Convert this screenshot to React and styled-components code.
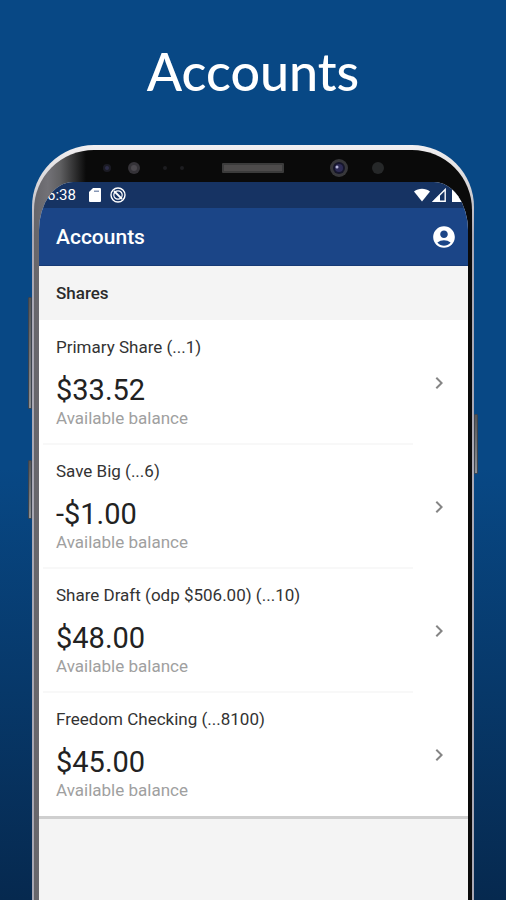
import { createGlobalStyle, styled } from "styled-components";
import { MdAccountCircle, MdChevronRight } from "react-icons/md";

const GlobalStyle = createGlobalStyle`
  * {
    box-sizing: border-box;
  }

  body {
    margin: 0;
    background: #06294f;
    font-family: Roboto, "Liberation Sans", sans-serif;
  }
`;

const Page = styled.div`
  display: flex;
  flex-direction: column;
  min-height: 100vh;
  background: linear-gradient(#084885 0%, #084885 52%, #06294f 100%);
`;

const Headline = styled.h1`
  margin: 0;
  padding: 41px 16px 44px;
  color: #fff;
  font-family: Lato, sans-serif;
  font-size: 52px;
  font-weight: 500;
  line-height: 60px;
  text-align: center;
`;

const Phone = styled.div`
  position: relative;
  display: flex;
  flex: 1;
  margin: 0 32px;
  padding: 5px 2px 0;
  border-radius: 62px 62px 0 0;
  background: linear-gradient(#f2f0f2 0, #d8d6d8 40px, #a9a8b4 90px);
`;

const SideKey = styled.span`
  position: absolute;
  top: ${({ $top }) => $top}px;
  ${({ $side }) => $side}: -4px;
  width: 4px;
  height: ${({ $height }) => $height}px;
  border: 1px solid #3c4450;
  border-radius: 1px;
  background: linear-gradient(#555, #8c8f92);
`;

const Bezel = styled.div`
  display: flex;
  flex: 1;
  flex-direction: column;
  min-width: 0;
  padding: 0 4px 0 5px;
  border-radius: 60px 60px 0 0;
  background: linear-gradient(
    to right,
    #66656a 0,
    #727176 14px,
    #606062 26px,
    #0a0a0a 52px
  );
`;

const SensorBar = styled.div`
  height: 32px;
  padding: 0 60px;

  svg {
    display: block;
    width: 100%;
    height: 32px;
  }
`;

const Screen = styled.main`
  display: flex;
  flex: 1;
  flex-direction: column;
  overflow: hidden;
  border-radius: 34px 34px 0 0 / 48px 48px 0 0;
  background: #f4f4f4;
`;

const StatusBar = styled.div`
  display: flex;
  align-items: center;
  height: 26px;
  padding: 0 6px 0 8px;
  background: #163363;
  color: #fff;
  font-size: 15px;
  line-height: 26px;
`;

const StatusIcons = styled.div`
  display: flex;
  align-items: center;
  gap: ${({ $gap }) => $gap}px;
  margin-left: ${({ $end }) => ($end ? "auto" : "12px")};
`;

const AppBar = styled.header`
  display: flex;
  align-items: center;
  justify-content: space-between;
  height: 58px;
  padding: 0 11px 0 17px;
  border-bottom: 1px solid #163a75;
  background: #1b4587;
  color: #fff;
`;

const AppTitle = styled.h2`
  margin: 0;
  font-size: 21px;
  font-weight: 500;
  line-height: 28px;
`;

const IconButton = styled.button`
  display: flex;
  padding: 0;
  border: none;
  background: none;
  color: inherit;
  cursor: pointer;
`;

const SectionTitle = styled.h3`
  margin: 0;
  padding: 17px;
  color: #2b2b2b;
  font-size: 17px;
  font-weight: 500;
  line-height: 20px;
`;

const AccountList = styled.ul`
  margin: 0;
  padding: 0;
  border-bottom: 3px solid #cfcfcf;
  background: #fff;
  list-style: none;
`;

const AccountItem = styled.li`
  & + &::before {
    content: "";
    display: block;
    height: 2px;
    margin: -1px 55px -1px 4px;
    background: #f8f8f8;
  }
`;

const AccountButton = styled.button`
  display: flex;
  align-items: center;
  justify-content: space-between;
  width: 100%;
  padding: 17px 17px 16px;
  border: none;
  background: none;
  color: #222;
  font-family: inherit;
  text-align: left;
  cursor: pointer;
`;

const AccountInfo = styled.span`
  display: flex;
  flex-direction: column;
`;

const AccountName = styled.span`
  margin-bottom: 15px;
  color: #333;
  font-size: 17px;
  line-height: 20px;
`;

const Balance = styled.span`
  font-size: 29px;
  line-height: 36px;
`;

const Caption = styled.span`
  color: #a0a0a0;
  font-size: 17px;
  line-height: 20px;
`;

const accounts = [
  { name: "Primary Share (...1)", balance: "$33.52" },
  { name: "Save Big (...6)", balance: "-$1.00" },
  { name: "Share Draft (odp $506.00) (...10)", balance: "$48.00" },
  { name: "Freedom Checking (...8100)", balance: "$45.00" },
];

function Sensors() {
  return (
    <svg viewBox="0 0 309 32" aria-hidden="true">
      <circle cx="8" cy="18" r="4" fill="#1b1b24" />
      <circle cx="8" cy="18" r="2" fill="#2c2c48" />
      <circle cx="35" cy="18" r="6" fill="#353338" />
      <circle cx="35" cy="18" r="3" fill="#4b484d" />
      <circle cx="66" cy="18" r="2" fill="#1d1d20" />
      <circle cx="83" cy="18" r="2" fill="#1d1d20" />
      <rect x="123" y="13" width="62" height="10" rx="1" fill="#3b3b3b" />
      <rect x="125" y="15" width="58" height="6" fill="#4d4b4b" />
      <circle cx="240" cy="18" r="9" fill="#37373a" />
      <circle cx="240" cy="18" r="6" fill="#15152a" />
      <circle cx="240" cy="18" r="4" fill="#2d2b55" />
      <circle cx="238" cy="17" r="1.5" fill="#b9b9da" />
      <circle cx="279" cy="18" r="6" fill="#262829" />
    </svg>
  );
}

function SdCardIcon() {
  return (
    <svg width="14" height="16" viewBox="0 0 14 16">
      <path d="M5 1h7a1 1 0 0 1 1 1v12a1 1 0 0 1-1 1H2a1 1 0 0 1-1-1V5z" fill="#fff" />
      <path d="M6 4.2h5" stroke="#8797b5" strokeWidth="1.4" />
    </svg>
  );
}

function NoDisturbIcon() {
  return (
    <svg width="16" height="16" viewBox="0 0 16 16" fill="none" stroke="#fff">
      <circle cx="8" cy="8" r="7" strokeWidth="1.4" />
      <circle cx="8" cy="8" r="4.2" strokeWidth="1.2" />
      <path d="M4 4l8 8" strokeWidth="1.8" />
    </svg>
  );
}

function WifiIcon() {
  return (
    <svg width="16" height="14" viewBox="0 0 16 14" fill="#fff">
      <path d="M0 3.5C4.5-.2 11.5-.2 16 3.5L8 13.5z" />
    </svg>
  );
}

function SignalIcon() {
  return (
    <svg width="14" height="14" viewBox="0 0 14 14">
      <path d="M1.5 13.2L13.2 1.5v11.7z" fill="none" stroke="#fff" strokeWidth="1.4" />
      <path d="M1 13.5L8 6.5v7z" fill="#fff" />
    </svg>
  );
}

function BatteryIcon() {
  return (
    <svg width="14" height="14" viewBox="0 0 14 14" fill="#fff">
      <path d="M4 1.5h3V0h4v1.5h3V14H4z" />
    </svg>
  );
}

function Account({ name, balance }) {
  return (
    <AccountItem>
      <AccountButton type="button">
        <AccountInfo>
          <AccountName>{name}</AccountName>
          <Balance>{balance}</Balance>
          <Caption>Available balance</Caption>
        </AccountInfo>
        <MdChevronRight size={24} color="#858585" />
      </AccountButton>
    </AccountItem>
  );
}

function App() {
  return (
    <Page>
      <GlobalStyle />
      <Headline>Accounts</Headline>
      <Phone>
        <SideKey $side="left" $top={152} $height={112} />
        <SideKey $side="left" $top={315} $height={59} />
        <SideKey $side="right" $top={269} $height={60} />
        <Bezel>
          <SensorBar>
            <Sensors />
          </SensorBar>
          <Screen>
            <StatusBar>
              <span>6:38</span>
              <StatusIcons $gap={8}>
                <SdCardIcon />
                <NoDisturbIcon />
              </StatusIcons>
              <StatusIcons $gap={2} $end>
                <WifiIcon />
                <SignalIcon />
                <BatteryIcon />
              </StatusIcons>
            </StatusBar>
            <AppBar>
              <AppTitle>Accounts</AppTitle>
              <IconButton type="button" aria-label="Profile">
                <MdAccountCircle size={26} />
              </IconButton>
            </AppBar>
            <SectionTitle>Shares</SectionTitle>
            <AccountList>
              {accounts.map((account) => (
                <Account key={account.name} {...account} />
              ))}
            </AccountList>
          </Screen>
        </Bezel>
      </Phone>
    </Page>
  );
}

export default App;
